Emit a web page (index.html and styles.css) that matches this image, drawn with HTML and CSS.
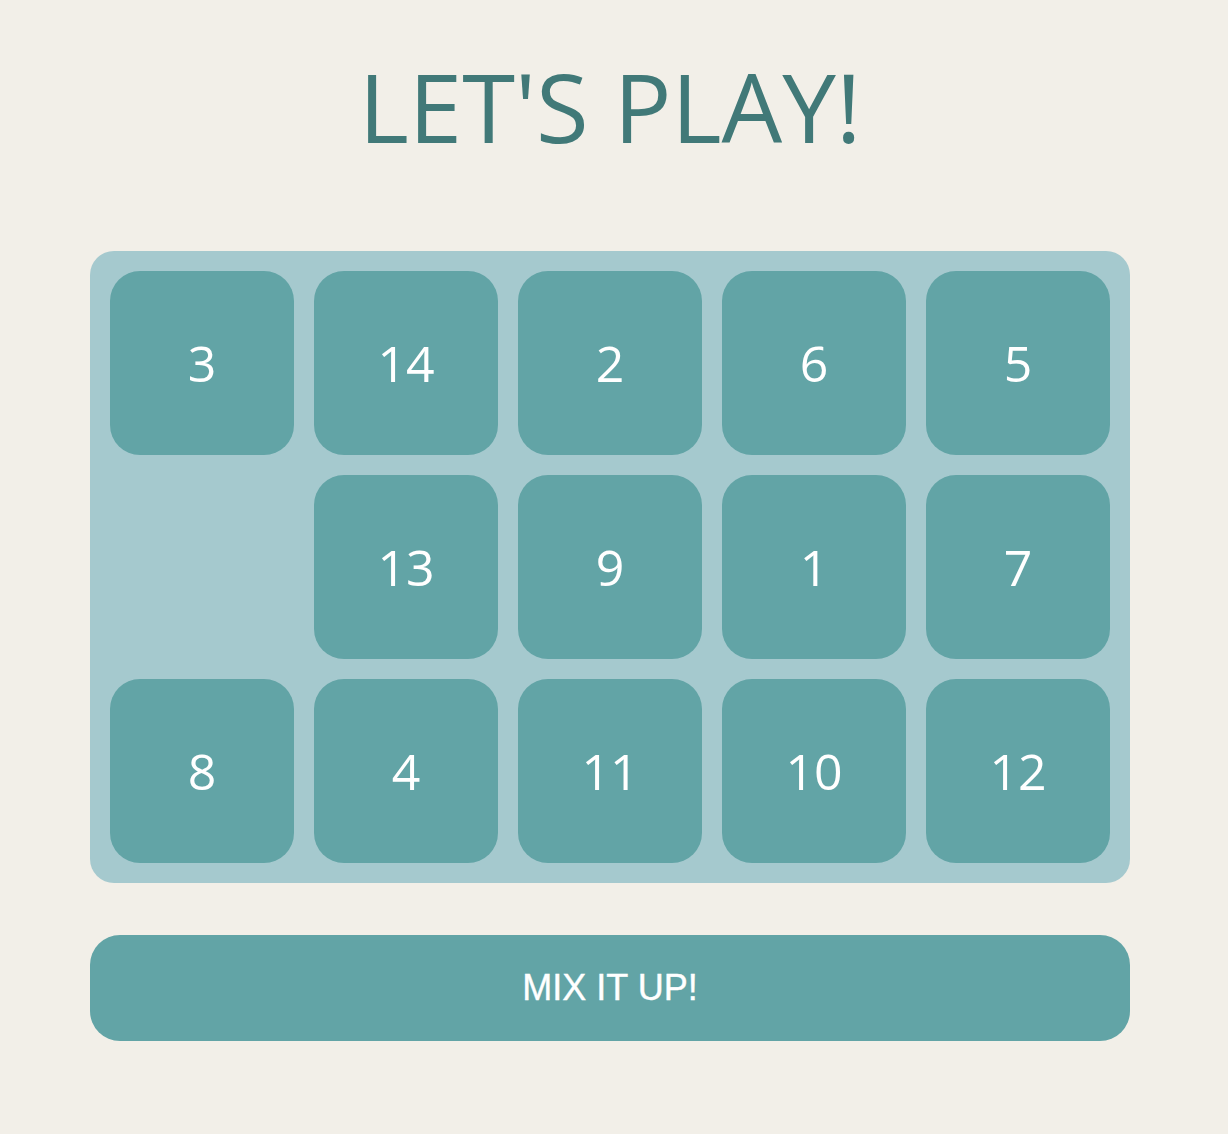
FILE: index.html
```html
<!DOCTYPE html>
<html>
<head>
<meta charset="utf-8">
<link rel="stylesheet" href="styles.css">
</head>
<body>
<main class="page">
  <h1 class="title">LET'S PLAY!</h1>
  <div class="board">
    <div class="tile">3</div>
    <div class="tile">14</div>
    <div class="tile">2</div>
    <div class="tile">6</div>
    <div class="tile">5</div>
    <div class="tile empty"></div>
    <div class="tile">13</div>
    <div class="tile">9</div>
    <div class="tile">1</div>
    <div class="tile">7</div>
    <div class="tile">8</div>
    <div class="tile">4</div>
    <div class="tile">11</div>
    <div class="tile">10</div>
    <div class="tile">12</div>
  </div>
  <button class="mix">MIX IT UP!</button>
</main>
</body>
</html>
```
FILE: styles.css
```css
html, body {
  margin: 0;
  background: #f2efe8;
}
body {
  padding: 0 8px 0 0;
  font-family: "Open Sans", sans-serif;
}
.page {
  width: 1040px;
  margin: 0 auto;
  padding-top: 40px;
}
.title {
  margin: 0;
  text-align: center;
  font-weight: 400;
  font-size: 96px;
  line-height: 132px;
  color: #417978;
}
.board {
  margin-top: 79px;
  background: #a5c9ce;
  border-radius: 24px;
  padding: 20px;
  display: grid;
  grid-template-columns: repeat(5, 184px);
  grid-auto-rows: 184px;
  gap: 20px;
}
.tile {
  background: #62a4a6;
  border-radius: 30px;
  color: #ffffff;
  font-size: 50px;
  display: flex;
  align-items: center;
  justify-content: center;
}
.tile.empty {
  background: transparent;
}
.mix {
  display: block;
  width: 100%;
  height: 106px;
  margin-top: 52px;
  border: none;
  border-radius: 30px;
  background: #62a4a6;
  color: #ffffff;
  font-family: "Liberation Sans", Arial, sans-serif;
  font-size: 36px;
  -webkit-text-stroke: 0.4px #ffffff;
  padding: 0;
}
```
